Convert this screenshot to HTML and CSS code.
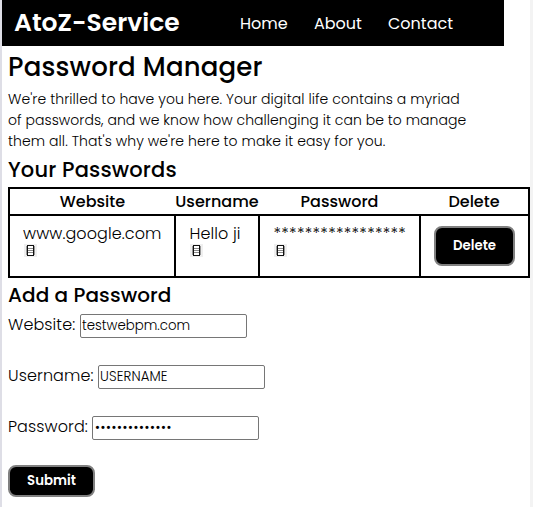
FILE: index.html
```html
<!DOCTYPE html>
<html lang="en">
<head>
<meta charset="utf-8">
<title>AtoZ-Service</title>
<link rel="stylesheet" href="styles.css">
</head>
<body>
<header class="navbar">
  <div class="brand"><span>AtoZ-Service</span></div>
  <nav class="links"><span class="home">Home</span><span class="about">About</span><span class="contact">Contact</span></nav>
</header>
<main class="content">
  <h1>Password Manager</h1>
  <p class="intro"><span class="l1">We're thrilled to have you here. Your digital life contains a myriad</span><br><span class="l2">of passwords, and we know how challenging it can be to manage</span><br><span class="l3">them all. That's why we're here to make it easy for you.</span></p>
  <h2 class="your">Your Passwords</h2>
  <table>
    <colgroup><col class="c1"><col class="c2"><col class="c3"><col class="c4"></colgroup>
    <thead><tr><th>Website</th><th class="user">Username</th><th>Password</th><th>Delete</th></tr></thead>
    <tbody><tr>
      <td><div class="value site">www.google.com</div><svg class="copy" viewBox="0 0 13 13"><path class="bg" d="M0 0h13v13H0z"/><path class="side" d="M2.5 2v9M10.5 2v9"/><path class="box" d="M3.5 1.5h6v10h-6z"/><path class="rule" d="M4 4.5h5M4 6.5h5M4 8.5h5"/></svg></td>
      <td><div class="value hello">Hello ji</div><svg class="copy" viewBox="0 0 13 13"><path class="bg" d="M0 0h13v13H0z"/><path class="side" d="M2.5 2v9M10.5 2v9"/><path class="box" d="M3.5 1.5h6v10h-6z"/><path class="rule" d="M4 4.5h5M4 6.5h5M4 8.5h5"/></svg></td>
      <td><div class="value stars">*****************</div><svg class="copy" viewBox="0 0 13 13"><path class="bg" d="M0 0h13v13H0z"/><path class="side" d="M2.5 2v9M10.5 2v9"/><path class="box" d="M3.5 1.5h6v10h-6z"/><path class="rule" d="M4 4.5h5M4 6.5h5M4 8.5h5"/></svg></td>
      <td><button class="btn delete">Delete</button></td>
    </tr></tbody>
  </table>
  <h2 class="add">Add a Password</h2>
  <form>
    <div class="field"><label class="lw" for="website">Website:</label><input id="website" value="testwebpm.com"></div>
    <div class="field"><label class="lu" for="username">Username:</label><input id="username" class="upper" value="USERNAME"></div>
    <div class="field"><label class="lp" for="password">Password:</label><input id="password" type="password" value="12345678901234"></div>
    <button class="btn submit" type="button">Submit</button>
  </form>
</main>
</body>
</html>
```

FILE: styles.css
```css
* { box-sizing: border-box; margin: 0; padding: 0; }
html { height: 507px; overflow: hidden; background: #fff; }
body {
  height: 507px;
  overflow: hidden;
  border-left: 2px solid #dedee6;
  background: linear-gradient(#f3f3f3, #f3f3f3) right / 3px 100% no-repeat;
  font-family: Poppins, Inter, sans-serif;
  font-size: 16px;
  color: #000;
  white-space: nowrap;
}
.navbar { display: flex; width: 502px; height: 46px; background: #000; color: #fff; }
.brand { width: 238px; padding-left: 12px; font-size: 25px; font-weight: 600; line-height: 45px; }
.links { display: flex; line-height: 48px; font-size: 16px; }
.home { width: 74px; }
.about { width: 74px; }
.content { padding-left: 6px; }
h1 { height: 42px; font-size: 26px; font-weight: 500; line-height: 42px; letter-spacing: 0.17px; }
.intro { font-size: 14px; font-weight: 300; line-height: 21px; height: 66px; padding-top: 1px; }
.l1, .l3 { letter-spacing: 0.072px; }
.l2 { letter-spacing: 0.04px; }
h2 { font-size: 20px; font-weight: 500; }
.your { height: 33px; font-size: 21px; line-height: 32px; letter-spacing: 0.15px; }
table { width: 522px; height: 91px; table-layout: fixed; border-collapse: collapse; border: 2px solid #000; }
.c1 { width: 166px; } .c2 { width: 84px; } .c3 { width: 161px; } .c4 { width: 109px; }
th { height: 27px; font-weight: 500; line-height: 25px; text-align: center; }
td { height: 62px; padding: 7px 0 0 13px; border: 2px solid #000; vertical-align: top; font-weight: 300; }
.value { height: 21px; line-height: 22px; letter-spacing: 0.1px; }
.hello { padding-left: 0.5px; }
.stars { padding-left: 0.5px; letter-spacing: 0.3px; }
.copy { display: block; width: 13px; height: 13px; margin-left: 1px; shape-rendering: crispEdges; }
.bg { fill: #efefef; }
.side { stroke: #999; fill: none; }
.box { fill: #fff; stroke: #111; }
.rule { stroke: #888; fill: none; }
.btn { display: block; border: 2px solid #808080; border-radius: 8px; background: #000; color: #fff; font-family: inherit; font-size: 13.33px; font-weight: 600; }
.delete { width: 81px; height: 40px; margin-top: 3px; }
.submit { width: 87px; height: 32px; margin-top: -2px; }
.add { height: 36px; line-height: 34px; letter-spacing: 0.08px; }
.field { display: flex; height: 51px; gap: 4px; font-weight: 300; line-height: 22px; letter-spacing: 0.1px; }
.lw { width: 68px; } .lu { width: 86px; } .lp { width: 80px; }
input { width: 167px; height: 24px; padding: 0 1px; border: 1px solid #767676; border-radius: 2px; font-family: inherit; font-size: 13.33px; font-weight: 300; }
#username { letter-spacing: 0.12px; }
#password { padding-left: 2px; letter-spacing: 0.62px; }
```
